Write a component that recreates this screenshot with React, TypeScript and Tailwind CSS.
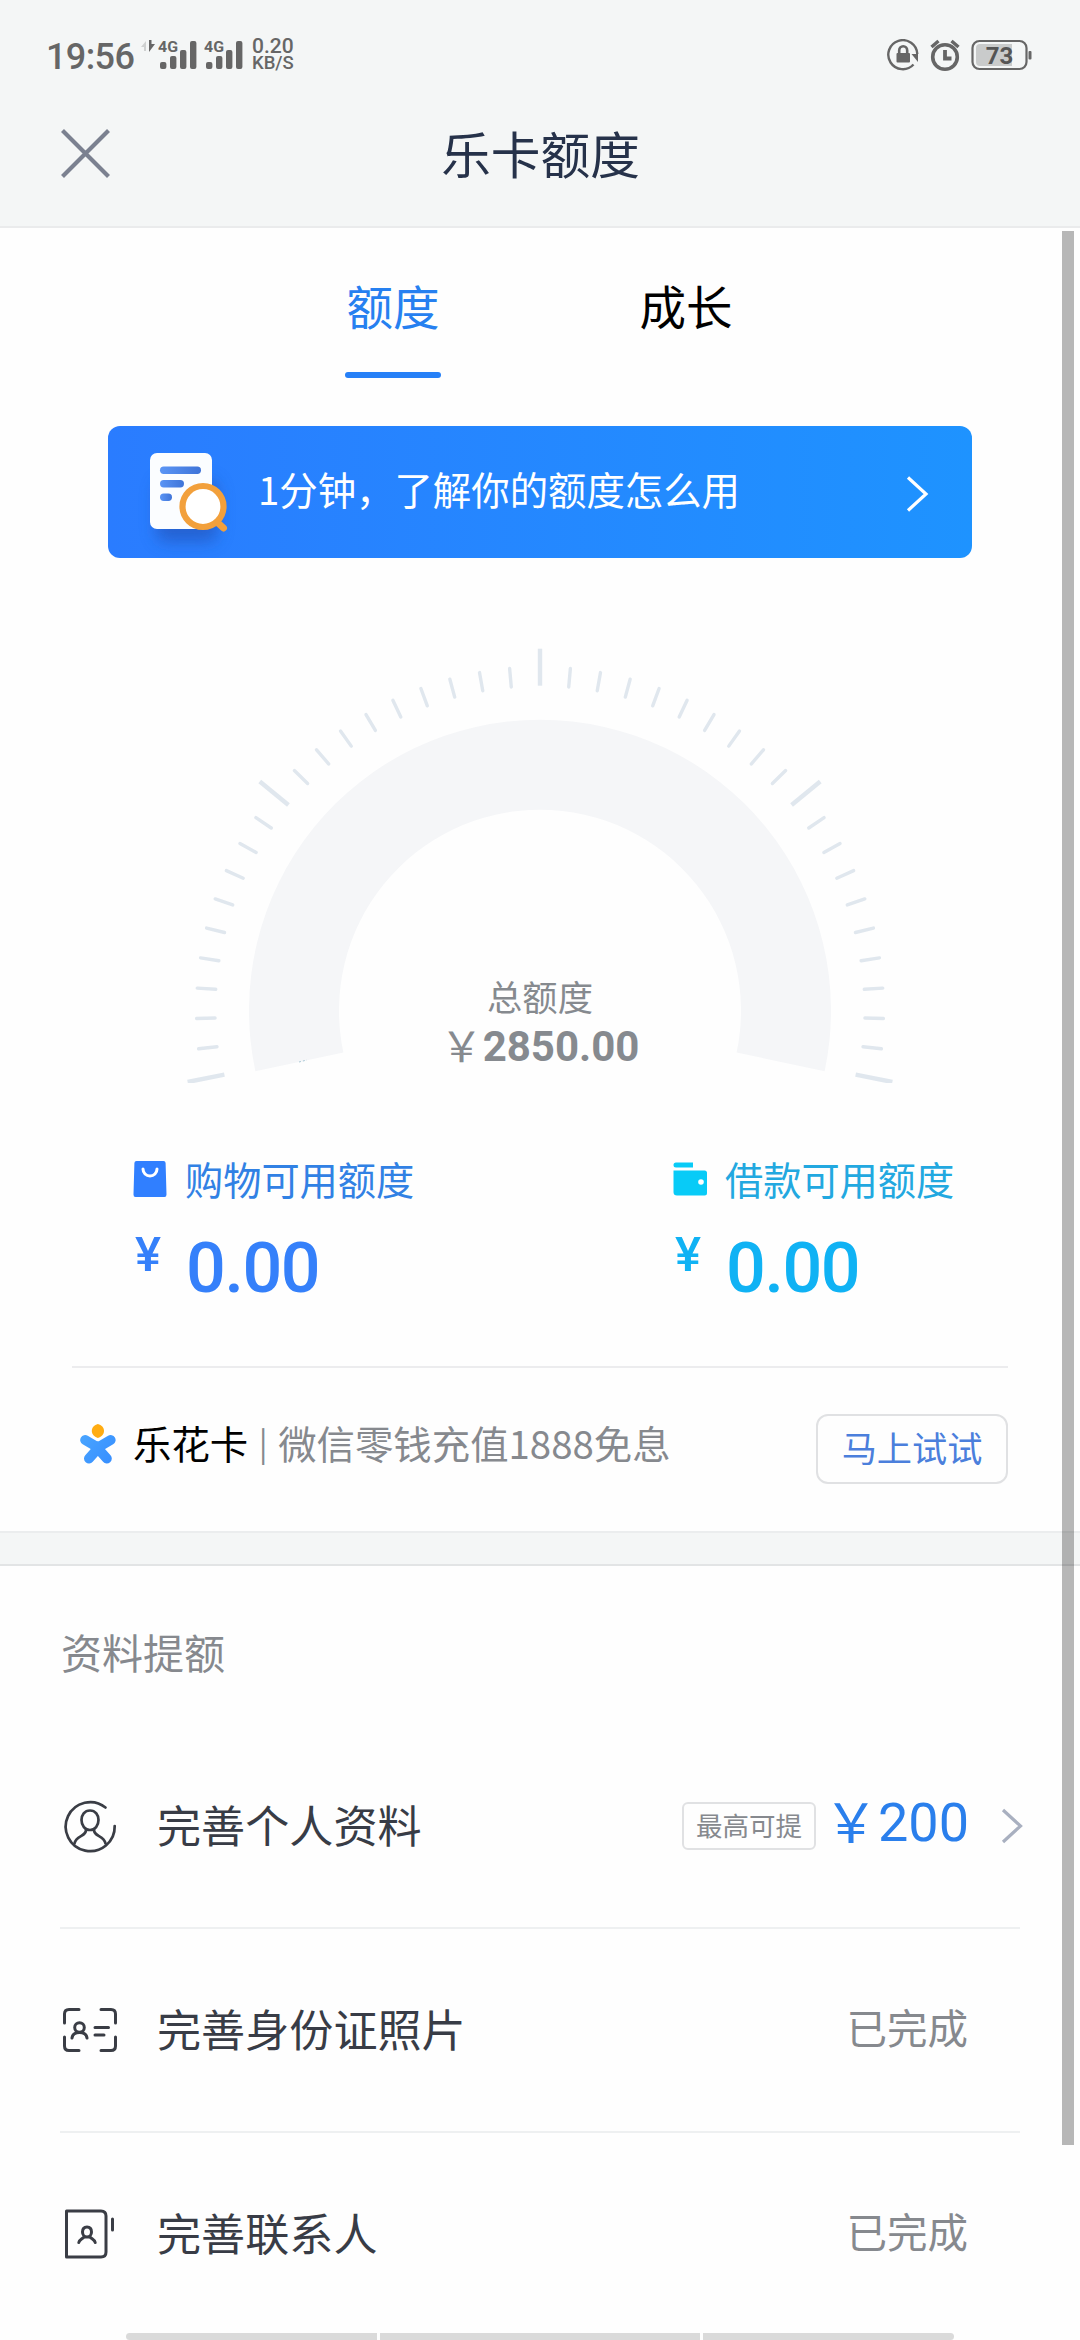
import React from "react";

const CJK = "font-['Noto_Sans_CJK_SC','Noto_Sans',sans-serif]";
const ROBOTO = "font-['Roboto','Noto_Sans_CJK_SC',sans-serif]";

function Signal() {
  return (
    <svg width="40" height="32" viewBox="0 0 40 32" className="block" fill="#666">
      <text x="0" y="14" fontSize="15.5" fontWeight="700" fontFamily="Roboto, sans-serif" textLength="20" lengthAdjust="spacingAndGlyphs">4G</text>
      <rect x="2" y="24" width="6.4" height="7" rx="2" />
      <rect x="12" y="18" width="6.4" height="13" rx="2" />
      <rect x="22" y="12" width="6.4" height="19" rx="2" />
      <rect x="32" y="3" width="6.4" height="28" rx="2" />
    </svg>
  );
}

function StatusBar() {
  return (
    <div className={`flex h-[110px] items-start pl-[46px] text-[#666] ${ROBOTO}`}>
      <span className="mt-[37px] w-[94px] text-[36px] leading-[40px] font-medium tracking-[-0.6px] whitespace-nowrap">19:56</span>
      <svg width="18" height="14" viewBox="0 0 18 14" className="mt-[39px] block">
        <path d="M1 8 L6 2 V12 H4 V8 Z" fill="#cfd1d1" />
        <path d="M9 1 H11.500 V5 H15 L9 13 Z" fill="#666" />
      </svg>
      <div className="mt-[38px] flex gap-[6px]">
        <Signal />
        <Signal />
      </div>
      <div className="mt-[37px] ml-[8px] flex flex-col font-medium">
        <span className="text-[21px] leading-[19px]">0.20</span>
        <span className="text-[18.5px] leading-[15px]">KB/S</span>
      </div>
      <div className="mt-[39px] mr-[47px] ml-auto flex">
        <svg width="34" height="34" viewBox="0 0 34 34" className="block" fill="none" stroke="#666">
          <path d="M27.500 25.500 A14.500 14.500 0 1 1 31.300 15" strokeWidth="2.400" />
          <path d="M25.500 15 L32 15 V23 Z" fill="#666" stroke="none" />
          <rect x="10.500" y="14" width="13.500" height="9.500" rx="1" fill="#666" stroke="none" />
          <path d="M13.200 15 V11.500 a4 4.300 0 0 1 8 0 V15" strokeWidth="2.600" />
        </svg>
        <svg width="34" height="34" viewBox="0 0 34 34" className="ml-[8px] block" fill="none" stroke="#666">
          <circle cx="17" cy="18" r="12.300" strokeWidth="3.600" />
          <path d="M3.500 8 L10.500 2 M30.500 8 L23.500 2" strokeWidth="3.400" />
          <path d="M17 11 V19.500 H23.500" strokeWidth="3.800" />
        </svg>
        <svg width="62" height="32" viewBox="0 0 62 32" className="ml-[9px] block">
          <rect x="1.500" y="2" width="54" height="28" rx="7" fill="none" stroke="#666" strokeWidth="2.200" />
          <path d="M9 5 H41 V27 H9 a4 4 0 0 1 -4 -4 V9 a4 4 0 0 1 4 -4 Z" fill="#c9cbcb" />
          <rect x="57.500" y="12" width="3" height="8.500" rx="1" fill="#666" />
          <text x="28.500" y="25" textAnchor="middle" fontSize="24" fontWeight="700" fontFamily="Roboto, sans-serif" fill="#555">73</text>
        </svg>
      </div>
    </div>
  );
}

function NavBar() {
  return (
    <div className="flex h-[116px] items-start">
      <svg width="49" height="49" viewBox="0 0 49 49" className="mt-[19px] ml-[61px] block">
        <path d="M1.500 1.500 L47.500 47.500 M47.500 1.500 L1.500 47.500" stroke="#7b8190" strokeWidth="4.200" />
      </svg>
      <h1 className="mt-[17px] mr-[109px] flex-1 text-center text-[49.7px] leading-[50px] text-[#26324a]">乐卡额度</h1>
    </div>
  );
}

function Tabs() {
  return (
    <div className="flex shrink-0 gap-[196px] pt-[52px] pl-[345px] text-[46.5px] leading-[50px]">
      <div className="flex w-[96px] flex-col items-center text-[#2680f0]">
        <span>额度</span>
        <span className="mt-[42px] h-[6px] w-full rounded-[3px] bg-[#2680f7]" />
      </div>
      <div className="flex w-[98px] flex-col items-center text-black">
        <span>成长</span>
      </div>
    </div>
  );
}

function Banner() {
  return (
    <div className="mx-[108px] mt-[48px] flex h-[132px] shrink-0 items-center rounded-[12px] bg-linear-to-r from-[#2a7cff] to-[#1e93ff]">
      <svg width="110" height="132" viewBox="0 0 110 132" className="ml-[24px] block">
        <defs>
          <linearGradient id="line" x1="0" x2="1"><stop offset="0" stopColor="#5b95f5" /><stop offset="1" stopColor="#3f74d8" /></linearGradient>
          <filter id="soft" x="-50%" y="-50%" width="200%" height="200%"><feGaussianBlur stdDeviation="8" /></filter>
        </defs>
        <rect x="24" y="54" width="62" height="62" rx="10" fill="#2450b4" opacity=".6" filter="url(#soft)" />
        <rect x="18" y="27" width="62" height="76" rx="7" fill="#fbfdff" />
        <rect x="28" y="40.500" width="41" height="7.500" rx="3.700" fill="url(#line)" />
        <rect x="28" y="54" width="24" height="7.500" rx="3.700" fill="url(#line)" />
        <rect x="28" y="67.500" width="12" height="7.500" rx="3.700" fill="url(#line)" />
        <path d="M86 97 L91.500 102" stroke="#f2a03c" strokeWidth="7" strokeLinecap="round" />
        <circle cx="71" cy="80.500" r="20.500" fill="#fff" stroke="#f2a03c" strokeWidth="6.200" />
      </svg>
      <span className="ml-[16px] pb-[8px] text-[38.4px] leading-[40px] text-white">1分钟，了解你的额度怎么用</span>
      <svg width="24" height="36" viewBox="0 0 24 36" className="mt-[4px] mr-[42px] ml-auto block">
        <path d="M2 1.500 L20 18 L2 34.500" fill="none" stroke="#fff" strokeWidth="3.200" />
      </svg>
    </div>
  );
}

const polar = (deg: number, r: number) => {
  const a = (deg * Math.PI) / 180;
  return [540 + r * Math.sin(a), 370.7 - r * Math.cos(a)];
};

function Gauge() {
  const ticks = Array.from({ length: 41 }, (_, i) => i - 20);
  const [ox1, oy1] = polar(-102, 291);
  const [ox2, oy2] = polar(102, 291);
  const [ix1, iy1] = polar(-102, 201);
  const [ix2, iy2] = polar(102, 201);
  return (
    <div className="relative mt-[82px] h-[443px] shrink-0">
      <svg width="1080" height="443" viewBox="0 0 1080 443" className="block">
        <path d={`M${ox1} ${oy1} A291 291 0 1 1 ${ox2} ${oy2} L${ix2} ${iy2} A201 201 0 1 0 ${ix1} ${iy1} Z`} fill="#f5f6f8" />
        {ticks.map((k) => {
          const major = k % 10 === 0;
          const end = Math.abs(k) === 20;
          const [x1, y1] = polar(k * 5.072, end ? 322 : 325);
          const [x2, y2] = polar(k * 5.072, end ? 359.5 : major ? 362 : 343.5);
          return <line key={k} x1={x1} y1={y1} x2={x2} y2={y2} stroke="#e0e7ee" strokeWidth={major ? 4.4 : 3.4} strokeLinecap={major ? "butt" : "round"} />;
        })}
        <path d="M299 422 l8 -2" stroke="#a9c8d6" strokeWidth="1" strokeDasharray="2 2" />
      </svg>
      <div className="absolute inset-x-0 top-[338px] flex flex-col items-center text-[#868a8f]">
        <span className="text-[35.3px] leading-[36px]">总额度</span>
        <span className={`mt-[13px] flex text-[42px] leading-[40px] font-bold ${ROBOTO}`}>
          <span className={`mt-[-3px] font-normal ${CJK}`}>￥</span>
          <span>2850.00</span>
        </span>
      </div>
    </div>
  );
}

function Quota({ icon, label, labelColor, amountColor }: { icon: React.ReactNode; label: string; labelColor: string; amountColor: string }) {
  return (
    <div className="w-[540px] pl-[133px]">
      <div className="flex h-[41px] items-center">
        {icon}
        <span className={`ml-[18px] text-[38.2px] leading-[40px] ${labelColor}`}>{label}</span>
      </div>
      <div className={`flex h-[104px] items-start font-medium ${ROBOTO} ${amountColor}`}>
        <span className="mt-[31px] w-[53px] pl-[2px] text-[49px] leading-[50px]">¥</span>
        <span className="mt-[34px] text-[70px] leading-[70px] tracking-[-1.4px]">0.00</span>
      </div>
    </div>
  );
}

function Quotas() {
  return (
    <div className="flex shrink-0 pt-[75px]">
      <Quota
        label="购物可用额度"
        labelColor="text-[#3181e4]"
        amountColor="text-[#3580fa]"
        icon={
          <svg width="34" height="36" viewBox="0 0 34 36" className="block">
            <path d="M3.500 0 H30.500 Q32.500 0 32.600 2 L33.500 33.500 Q33.500 36 31.500 36 H2.500 Q0.400 36 0.500 33.500 L1.400 2 Q1.500 0 3.500 0 Z" fill="#307fff" />
            <path d="M10 8 a7 7 0 0 0 14 0" fill="none" stroke="#fff" strokeWidth="3" strokeLinecap="round" />
          </svg>
        }
      />
      <Quota
        label="借款可用额度"
        labelColor="text-[#22a8e0]"
        amountColor="text-[#10b2f4]"
        icon={
          <svg width="34" height="36" viewBox="0 0 34 36" className="block" fill="#08cbf7">
            <path d="M3 1.500 H20 V6.500 H3 A2.500 2.500 0 0 1 3 1.500 Z" />
            <path d="M0.500 9.500 H31.500 Q34 9.500 34 12 V32 Q34 34.500 31.500 34.500 H4 Q0.500 34.500 0.500 31 Z" />
            <circle cx="28" cy="21" r="2.800" fill="#fff" />
          </svg>
        }
      />
    </div>
  );
}

function Promo() {
  return (
    <div className="mx-[72px] mt-[63px] flex h-[165px] shrink-0 items-start border-t-2 border-[#ececee] pt-[46px]">
      <svg width="38" height="42" viewBox="0 0 38 42" className="mt-[9px] ml-[7px] block">
        <defs>
          <linearGradient id="petal" gradientUnits="userSpaceOnUse" x1="0" y1="10" x2="38" y2="42"><stop offset="0" stopColor="#4aa6ff" /><stop offset="1" stopColor="#358cff" /></linearGradient>
        </defs>
        <g fill="none" stroke="url(#petal)" strokeWidth="10" strokeLinecap="round">
          <path d="M6.200 17 L18.900 24.500 L31.600 17" />
          <path d="M10 35.500 L18.900 25.500 L27.800 35.500" />
        </g>
        <path d="M18.900 1 C22.500 2 25 4.500 25 8 C25 11.500 22 14 18.900 15 C15.800 14 12.800 11.500 12.800 8 C12.800 4.500 15.300 2 18.900 1 Z" fill="#ffac12" />
      </svg>
      <p className="mt-[8px] ml-[16px] flex text-[38.4px] leading-[40px] whitespace-nowrap text-[#86898e]">
        <span className="text-black">乐花卡</span>
        <span className="w-[30px] text-center text-[33px]">|</span>
        <span>微信零钱充值1888免息</span>
      </p>
      <button className="ml-auto flex h-[70px] w-[192px] justify-center rounded-[12px] border-2 border-[#e0e1e3] pt-[11px] text-[35.2px] leading-[40px] text-[#4b7fdc]">马上试试</button>
    </div>
  );
}

const stroke = { fill: "none", stroke: "#3a3d45", strokeWidth: 3, strokeLinecap: "round" as const, strokeLinejoin: "round" as const };

function ProfileIcon() {
  return (
    <svg width="60" height="60" viewBox="0 0 60 60" className="block" {...stroke} strokeWidth={2.7}>
      <path d="M45.500 11.500 A24.500 24.500 0 1 0 54.700 30" />
      <path d="M30 14.500 c5.500 0 8.500 4.500 8.500 9.500 c0 5.500 -3.500 10 -8.500 10 s-8.500 -4.500 -8.500 -10 c0 -5 3 -9.500 8.500 -9.500 Z" />
      <path d="M26 33.500 C26.500 41 16 39 14.500 47.500 M34 33.500 C33.500 41 44 39 45.500 47.500" />
    </svg>
  );
}

function IdIcon() {
  return (
    <svg width="60" height="60" viewBox="0 0 60 60" className="block" {...stroke}>
      <path d="M19 9.500 H9 Q4.500 9.500 4.500 14 V23 M41 9.500 H51 Q55.500 9.500 55.500 14 V23 M19 50.500 H9 Q4.500 50.500 4.500 46 V37 M41 50.500 H51 Q55.500 50.500 55.500 46 V37" />
      <circle cx="19.500" cy="27.500" r="4.800" />
      <path d="M12 38 C12.500 34.500 15 32.500 19.500 32.500 S26.500 34.500 27 38 M35 27.500 H48.500 M35 35 H44" />
    </svg>
  );
}

function ContactIcon() {
  return (
    <svg width="60" height="60" viewBox="0 0 60 60" className="block" {...stroke}>
      <path d="M6.500 7 H41 Q46 7 46 12 V48 Q46 53 41 53 H6.500 Z M52.500 15 V26" />
      <path d="M27 23 c3 0 4.500 2.200 4.500 5 s-1.800 5 -4.500 5 s-4.500 -2.200 -4.500 -5 s1.500 -5 4.500 -5 Z M18.800 38.500 C19.500 35.500 22.500 35 24.500 32.500 M35.200 38.500 C34.500 35.500 31.500 35 29.500 32.500" />
    </svg>
  );
}

function Row({ icon, label, last, children }: { icon: React.ReactNode; label: string; last?: boolean; children: React.ReactNode }) {
  return (
    <div className={last ? "mx-[60px] flex h-[200px] items-center pt-[2px]" : "mx-[60px] flex h-[204px] items-center border-b-2 border-[#eef0f1]"}>
      {icon}
      <span className="ml-[37px] pb-[4px] text-[44.1px] leading-[46px] text-[#383c46]">{label}</span>
      <div className="ml-auto flex items-center">{children}</div>
    </div>
  );
}

function Done() {
  return <span className="mr-[52px] pb-[7px] text-[40.5px] leading-[42px] text-[#86898e]">已完成</span>;
}

export default function App() {
  return (
    <div className={`relative flex h-[2340px] w-[1080px] flex-col overflow-hidden bg-[#fefefe] ${CJK}`}>
      <div className="h-[228px] shrink-0 border-b-2 border-[#eaebec] bg-[#f4f6f6]">
        <StatusBar />
        <NavBar />
      </div>
      <Tabs />
      <Banner />
      <Gauge />
      <Quotas />
      <Promo />
      <div className="h-[35px] shrink-0 border-t-2 border-b-2 border-t-[#ebedee] border-b-[#e2e4e5] bg-[#f4f6f6]" />
      <h2 className="mt-[64px] ml-[61px] shrink-0 text-[41px] leading-[42px] text-[#86898e]">资料提额</h2>
      <div className="mt-[53px] shrink-0">
        <Row icon={<ProfileIcon />} label="完善个人资料">
          <span className="flex h-[48px] w-[134px] justify-center rounded-[6px] border-2 border-[#e0e1e3] pt-[7px] text-[26.5px] leading-[27px] text-[#86898e]">最高可提</span>
          <span className={`ml-[8px] flex pb-[7px] text-[54px] leading-[56px] text-[#2a7fec] ${ROBOTO}`}>
            <span className={`mt-[-3px] ${CJK}`}>￥</span>
            <span>200</span>
          </span>
          <svg width="22" height="36" viewBox="0 0 22 36" className="mr-[-3px] ml-[32px] block">
            <path d="M2 2 L19.500 18 L2 34" fill="none" stroke="#a9b0c0" strokeWidth="3.200" />
          </svg>
        </Row>
        <Row icon={<IdIcon />} label="完善身份证照片">
          <Done />
        </Row>
        <Row icon={<ContactIcon />} label="完善联系人" last>
          <Done />
        </Row>
      </div>
      <div className="mt-auto flex h-[7px] shrink-0 gap-[3px] px-[126px]">
        <span className="w-[251px] rounded-l-[4px] bg-[#dadada]" />
        <span className="flex-1 bg-[#dadada]" />
        <span className="w-[251px] rounded-r-[4px] bg-[#dadada]" />
      </div>
      <div className="absolute top-[231px] left-[1062px] h-[1914px] w-[12px] bg-black/28" />
    </div>
  );
}
